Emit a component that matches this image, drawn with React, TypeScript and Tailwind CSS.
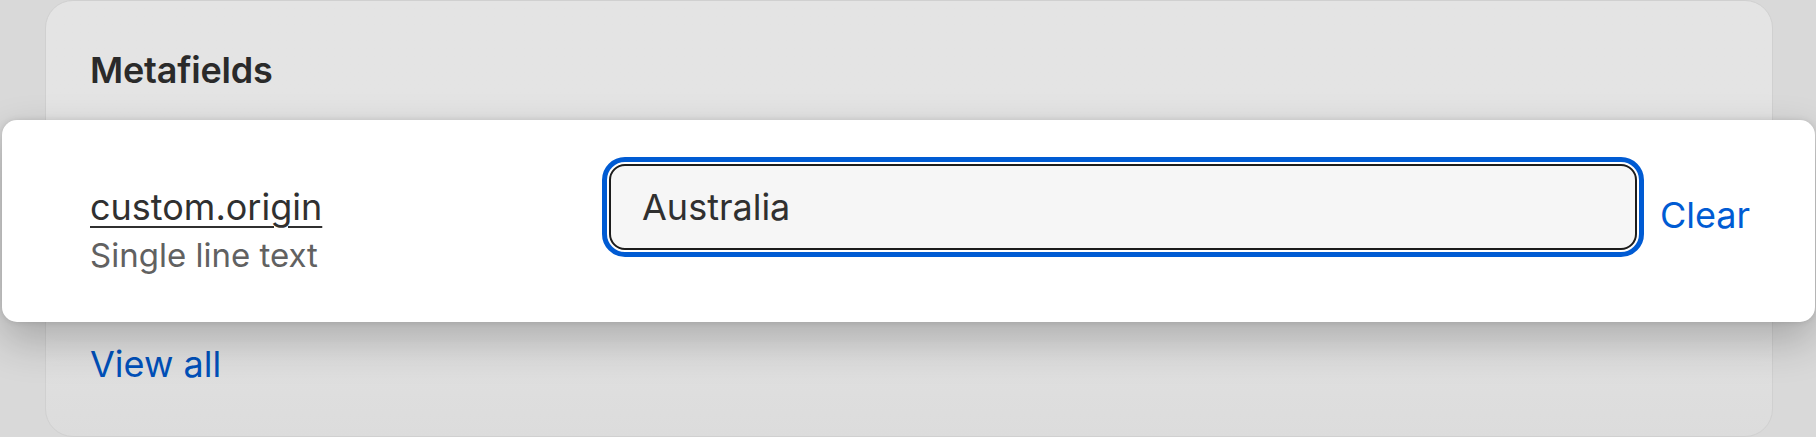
import React from "react";

export default function App() {
  return (
    <div
      className="w-[1816px] h-[437px] overflow-hidden bg-[#d9d9d9] text-[36px] leading-[48px] text-[#2b2b2b]"
      style={{ fontFamily: "Inter, 'Noto Sans', sans-serif" }}
    >
      <div className="ml-[45px] w-[1728px] h-[437px] rounded-[28px] border border-[#d0d0d0] pt-[45px] px-[44px] bg-gradient-to-b from-[#e4e4e4] from-[60%] to-[#dcdcdc]">
        <h2 className="font-semibold text-[#2a2a2a] tracking-[-0.2px]">Metafields</h2>
        <div className="mt-[26px] -ml-[88px] -mr-[87px] h-[202px] rounded-[15px] bg-white shadow-[0_18px_44px_rgba(0,0,0,0.24),0_0_6px_rgba(0,0,0,0.12)] flex items-start pt-[44px] pl-[88px] pr-[65px] relative">
          <div className="w-[519px] shrink-0 pt-[19px]">
            <div>
              <span className="underline decoration-[2px] underline-offset-[6px] text-[#303030]">custom.origin</span>
            </div>
            <div className="text-[33px] leading-[48px] text-[#616161]">Single line text</div>
          </div>
          <div className="flex-1 h-[86px] rounded-[16px] border-[2.5px] border-[#1c1c1c] bg-[#f6f6f6] outline-[5px] outline-solid outline-[#005bd3] outline-offset-[2px] flex items-center pl-[31px] text-[#303030]">
            Australia
          </div>
          <div className="ml-[23px] pt-[27px] text-[#005bd3]">Clear</div>
        </div>
        <div className="mt-[18px] text-[#0050b9]">View all</div>
      </div>
    </div>
  );
}
